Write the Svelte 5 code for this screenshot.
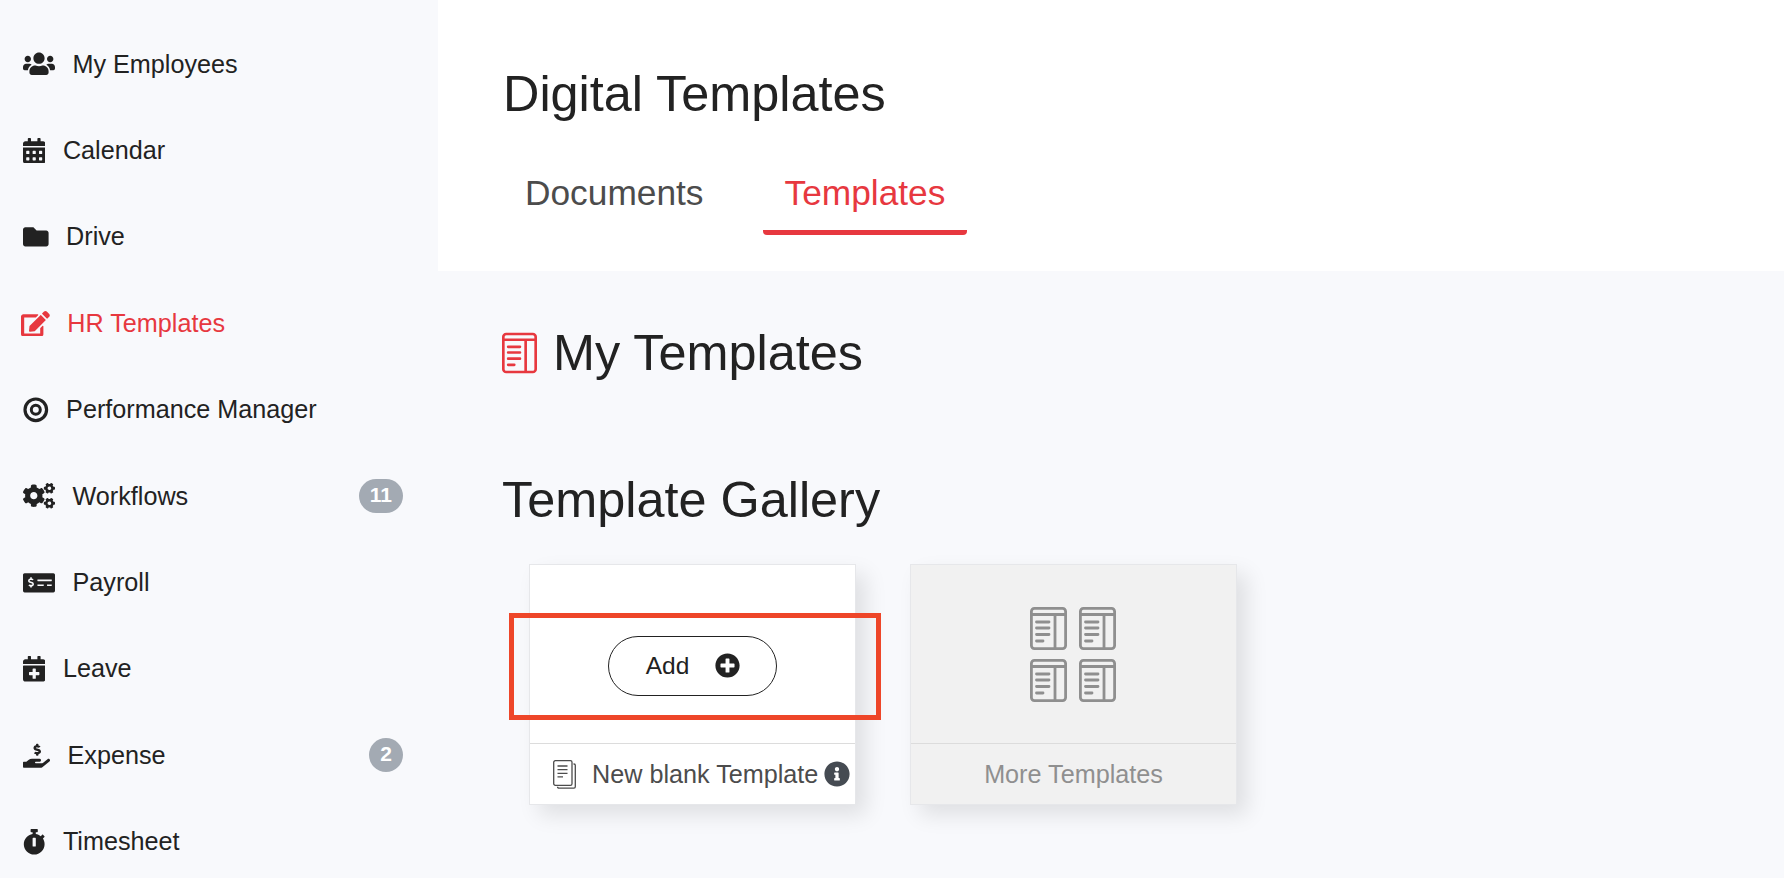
<script lang="ts">
  const P = {
    users: 'M96 224c35.3 0 64-28.7 64-64s-28.7-64-64-64-64 28.7-64 64 28.7 64 64 64zm448 0c35.3 0 64-28.7 64-64s-28.7-64-64-64-64 28.7-64 64 28.7 64 64 64zm32 32h-64c-17.6 0-33.5 7.1-45.1 18.6 40.3 22.1 68.9 62 75.1 109.4h66c17.7 0 32-14.3 32-32v-32c0-35.3-28.7-64-64-64zm-256 0c61.9 0 112-50.1 112-112S381.9 32 320 32 208 82.1 208 144s50.1 112 112 112zm76.8 32h-8.3c-20.8 10-43.9 16-68.5 16s-47.6-6-68.5-16h-8.3C179.6 288 128 339.6 128 403.2V432c0 26.5 21.5 48 48 48h288c26.5 0 48-21.5 48-48v-28.8c0-63.6-51.6-115.2-115.2-115.2zm-223.7-13.4C161.5 263.1 145.6 256 128 256H64c-35.3 0-64 28.7-64 64v32c0 17.7 14.3 32 32 32h65.9c6.3-47.4 34.9-87.3 75.2-109.4z',
    calendar: 'M0 464c0 26.5 21.5 48 48 48h352c26.5 0 48-21.5 48-48V192H0v272zm320-196c0-6.6 5.4-12 12-12h40c6.6 0 12 5.4 12 12v40c0 6.6-5.4 12-12 12h-40c-6.6 0-12-5.4-12-12v-40zm0 128c0-6.6 5.4-12 12-12h40c6.6 0 12 5.4 12 12v40c0 6.6-5.4 12-12 12h-40c-6.6 0-12-5.4-12-12v-40zM192 268c0-6.6 5.4-12 12-12h40c6.6 0 12 5.4 12 12v40c0 6.6-5.4 12-12 12h-40c-6.6 0-12-5.4-12-12v-40zm0 128c0-6.6 5.4-12 12-12h40c6.6 0 12 5.4 12 12v40c0 6.6-5.4 12-12 12h-40c-6.6 0-12-5.4-12-12v-40zM64 268c0-6.6 5.4-12 12-12h40c6.6 0 12 5.4 12 12v40c0 6.6-5.4 12-12 12H76c-6.6 0-12-5.4-12-12v-40zm0 128c0-6.6 5.4-12 12-12h40c6.6 0 12 5.4 12 12v40c0 6.6-5.4 12-12 12H76c-6.6 0-12-5.4-12-12v-40zM400 64h-48V16c0-8.8-7.2-16-16-16h-32c-8.8 0-16 7.2-16 16v48H160V16c0-8.8-7.2-16-16-16h-32c-8.8 0-16 7.2-16 16v48H48C21.5 64 0 85.5 0 112v48h448v-48c0-26.5-21.5-48-48-48z',
    folder: 'M464 128H272l-64-64H48C21.49 64 0 85.49 0 112v288c0 26.51 21.49 48 48 48h416c26.51 0 48-21.49 48-48V176c0-26.51-21.49-48-48-48z',
    edit: 'M402.6 83.2l90.2 90.2c3.8 3.8 3.8 10 0 13.8L274.4 405.6l-92.8 10.3c-12.4 1.4-22.9-9.1-21.5-21.5l10.3-92.8L388.8 83.2c3.8-3.8 10-3.8 13.8 0zm162-22.9l-48.8-48.8c-15.2-15.2-39.9-15.2-55.2 0l-35.4 35.4c-3.8 3.8-3.8 10 0 13.8l90.2 90.2c3.8 3.8 10 3.8 13.8 0l35.4-35.4c15.2-15.3 15.2-40 0-55.2zM384 346.2V448H64V128h229.8c3.2 0 6.2-1.3 8.5-3.5l40-40c7.6-7.6 2.2-20.5-8.5-20.5H48C21.5 64 0 85.5 0 112v352c0 26.5 21.5 48 48 48h352c26.5 0 48-21.5 48-48V306.2c0-10.7-12.9-16-20.5-8.5l-40 40c-2.2 2.3-3.5 5.3-3.5 8.5z',
    target: 'M256 8a248 248 0 1 0 0 496a248 248 0 1 0 0-496zm0 64a184 184 0 1 1 0 368a184 184 0 1 1 0-368zm0 64a120 120 0 1 0 0 240a120 120 0 1 0 0-240zm0 60a60 60 0 1 1 0 120a60 60 0 1 1 0-120z',
    cogs: 'M512.1 191l-8.2 14.3c-3 5.3-9.4 7.5-15.1 5.4-11.8-4.4-22.6-10.7-32.1-18.6-4.6-3.8-5.8-10.5-2.8-15.7l8.2-14.3c-6.9-8-12.3-17.3-15.9-27.4h-16.5c-6 0-11.2-4.3-12.2-10.3-2-12-2.1-24.6 0-37.1 1-6 6.2-10.4 12.2-10.4h16.5c3.6-10.1 9-19.4 15.9-27.4l-8.2-14.3c-3-5.2-1.9-11.9 2.8-15.7 9.5-7.9 20.4-14.2 32.1-18.6 5.7-2.1 12.1.1 15.1 5.4l8.2 14.3c10.5-1.9 21.2-1.9 31.7 0L552 6.3c3-5.3 9.4-7.5 15.1-5.4 11.8 4.4 22.6 10.7 32.1 18.6 4.6 3.8 5.8 10.5 2.8 15.7l-8.2 14.3c6.9 8 12.3 17.3 15.9 27.4h16.5c6 0 11.2 4.3 12.2 10.3 2 12 2.1 24.6 0 37.1-1 6-6.2 10.4-12.2 10.4h-16.5c-3.6 10.1-9 19.4-15.9 27.4l8.2 14.3c3 5.2 1.9 11.9-2.8 15.7-9.5 7.9-20.4 14.2-32.1 18.6-5.7 2.1-12.1-.1-15.1-5.4l-8.2-14.3c-10.4 1.9-21.2 1.9-31.7 0zm-10.5-58.8c38.5 29.6 82.4-14.3 52.8-52.8-38.5-29.7-82.4 14.3-52.8 52.8zM386.3 286.1l33.7 16.8c10.1 5.8 14.5 18.1 10.5 29.1-8.9 24.2-26.4 46.4-42.6 65.8-7.4 8.9-20.2 11.1-30.3 5.3l-29.1-16.8c-16 13.7-34.6 24.6-54.9 31.7v33.6c0 11.6-8.3 21.6-19.7 23.6-24.6 4.2-50.4 4.4-75.9 0-11.5-2-20-11.9-20-23.6V418c-20.3-7.2-38.9-18-54.9-31.7L74 403c-10 5.8-22.9 3.6-30.3-5.3-16.2-19.4-33.3-41.6-42.2-65.7-4-10.9.4-23.2 10.5-29.1l33.3-16.8c-3.9-20.9-3.9-42.4 0-63.4L12 205.8c-10.1-5.8-14.6-18.1-10.5-29 8.9-24.2 26-46.4 42.2-65.8 7.4-8.9 20.2-11.1 30.3-5.3l29.1 16.8c16-13.7 34.6-24.6 54.9-31.7V57.1c0-11.5 8.2-21.5 19.6-23.5 24.6-4.2 50.5-4.4 76-.1 11.5 2 20 11.9 20 23.6v33.6c20.3 7.2 38.9 18 54.9 31.7l29.1-16.8c10-5.8 22.9-3.6 30.3 5.3 16.2 19.4 33.2 41.6 42.1 65.8 4 10.9.1 23.2-10 29.1l-33.7 16.8c3.9 21 3.9 42.5 0 63.5zm-117.6 21.1c59.2-77-28.7-164.9-105.7-105.7-59.2 77 28.7 164.9 105.7 105.7zm243.4 182.7l-8.2 14.3c-3 5.3-9.4 7.5-15.1 5.4-11.8-4.4-22.6-10.7-32.1-18.6-4.6-3.8-5.8-10.5-2.8-15.7l8.2-14.3c-6.9-8-12.3-17.3-15.9-27.4h-16.5c-6 0-11.2-4.3-12.2-10.3-2-12-2.1-24.6 0-37.1 1-6 6.2-10.4 12.2-10.4h16.5c3.6-10.1 9-19.4 15.9-27.4l-8.2-14.3c-3-5.2-1.9-11.9 2.8-15.7 9.5-7.9 20.4-14.2 32.1-18.6 5.7-2.1 12.1.1 15.1 5.4l8.2 14.3c10.5-1.9 21.2-1.9 31.7 0l8.2-14.3c3-5.3 9.4-7.5 15.1-5.4 11.8 4.4 22.6 10.7 32.1 18.6 4.6 3.8 5.8 10.5 2.8 15.7l-8.2 14.3c6.9 8 12.3 17.3 15.9 27.4h16.5c6 0 11.2 4.3 12.2 10.3 2 12 2.1 24.6 0 37.1-1 6-6.2 10.4-12.2 10.4h-16.5c-3.6 10.1-9 19.4-15.9 27.4l8.2 14.3c3 5.2 1.9 11.9-2.8 15.7-9.5 7.9-20.4 14.2-32.1 18.6-5.7 2.1-12.1-.1-15.1-5.4l-8.2-14.3c-10.4 1.9-21.2 1.9-31.7 0zM501.6 431c38.5 29.6 82.4-14.3 52.8-52.8-38.5-29.6-82.4 14.3-52.8 52.8z',
    money: 'M608 64H32C14.33 64 0 78.33 0 96v320c0 17.67 14.33 32 32 32h576c17.67 0 32-14.33 32-32V96c0-17.67-14.33-32-32-32zM176 327.88V344c0 4.42-3.58 8-8 8h-16c-4.42 0-8-3.58-8-8v-16.29c-11.29-.58-22.27-4.52-31.37-11.35-3.9-2.93-4.1-8.77-.57-12.14l11.75-11.21c2.77-2.64 6.89-2.76 10.13-.73 3.87 2.42 8.26 3.72 12.82 3.72h28.11c6.5 0 11.8-5.92 11.8-13.19 0-5.95-3.61-11.19-8.77-12.73l-45-13.5c-18.59-5.58-31.58-23.42-31.58-43.39 0-24.52 19.05-44.44 42.67-45.07V152c0-4.42 3.58-8 8-8h16c4.42 0 8 3.58 8 8v16.29c11.29.58 22.27 4.51 31.37 11.35 3.9 2.93 4.1 8.77.57 12.14l-11.75 11.21c-2.77 2.64-6.89 2.76-10.13.73-3.87-2.43-8.26-3.72-12.82-3.72h-28.11c-6.5 0-11.8 5.92-11.8 13.19 0 5.95 3.61 11.19 8.77 12.73l45 13.5c18.59 5.58 31.58 23.42 31.58 43.39 0 24.53-19.05 44.44-42.67 45.07zM416 312c0 4.42-3.58 8-8 8H296c-4.42 0-8-3.58-8-8v-16c0-4.42 3.58-8 8-8h112c4.42 0 8 3.58 8 8v16zm160 0c0 4.42-3.58 8-8 8h-80c-4.42 0-8-3.58-8-8v-16c0-4.42 3.58-8 8-8h80c4.42 0 8 3.58 8 8v16zm0-96c0 4.42-3.58 8-8 8H296c-4.42 0-8-3.58-8-8v-16c0-4.42 3.58-8 8-8h272c4.42 0 8 3.58 8 8v16z',
    calPlus: 'M436 160H12c-6.6 0-12-5.4-12-12v-36c0-26.5 21.5-48 48-48h48V12c0-6.6 5.4-12 12-12h40c6.6 0 12 5.4 12 12v52h128V12c0-6.6 5.4-12 12-12h40c6.6 0 12 5.4 12 12v52h48c26.5 0 48 21.5 48 48v36c0 6.6-5.4 12-12 12zM12 192h424c6.6 0 12 5.4 12 12v260c0 26.5-21.5 48-48 48H48c-26.5 0-48-21.5-48-48V204c0-6.6 5.4-12 12-12zm316 140c0-6.6-5.4-12-12-12h-60v-60c0-6.6-5.4-12-12-12h-40c-6.6 0-12 5.4-12 12v60h-60c-6.6 0-12 5.4-12 12v40c0 6.6 5.4 12 12 12h60v60c0 6.6 5.4 12 12 12h40c6.6 0 12-5.4 12-12v-60h60c6.6 0 12-5.4 12-12v-40z',
    hand: 'M271.06,144.3l54.27,14.3a8.59,8.59,0,0,1,6.63,8.1c0,4.6-4.09,8.4-9.12,8.4h-35.6a30,30,0,0,1-11.19-2.2c-5.24-2.2-11.28-1.7-15.3,2l-19,17.5a11.68,11.68,0,0,0-2.25,2.66,11.42,11.42,0,0,0,3.88,15.74,83.77,83.77,0,0,0,34.51,11.5V240c0,8.8,7.83,16,17.37,16h17.37c9.55,0,17.38-7.2,17.38-16V222.4c32.93-3.6,57.84-31,53.5-63-3.15-23-22.46-41.3-46.56-47.7L282.68,97.4a8.59,8.59,0,0,1-6.63-8.1c0-4.6,4.09-8.4,9.12-8.4h35.6A30,30,0,0,1,332,83.1c5.23,2.2,11.28,1.7,15.3-2l19-17.5A11.31,11.31,0,0,0,368.47,61a11.43,11.43,0,0,0-3.84-15.78,83.82,83.82,0,0,0-34.52-11.5V16c0-8.8-7.82-16-17.37-16H295.37C285.82,0,278,7.2,278,16V33.6c-32.89,3.6-57.85,31-53.51,63C227.63,119.6,247,137.9,271.06,144.3ZM565.27,328.1c-11.8-10.7-30.2-10-42.6,0L430.27,402a63.64,63.64,0,0,1-40,14H272a16,16,0,0,1,0-32h78.29c15.9,0,30.71-10.9,33.25-26.6a31.2,31.2,0,0,0,.46-5.46A32,32,0,0,0,352,320H192a117.66,117.66,0,0,0-74.1,26.29L71.4,384H16A16,16,0,0,0,0,400v96a16,16,0,0,0,16,16H372.77a64,64,0,0,0,40-14L564,377a32,32,0,0,0,1.28-48.9Z',
    stopwatch: 'M432 304c0 114.9-93.1 208-208 208S16 418.9 16 304c0-104 76.3-190.2 176-205.5V64h-28c-6.6 0-12-5.4-12-12V12c0-6.6 5.4-12 12-12h120c6.6 0 12 5.4 12 12v40c0 6.6-5.4 12-12 12h-28v34.5c37.5 5.8 71.7 21.6 99.7 44.6l27.5-27.5c4.7-4.7 12.3-4.7 17 0l28.3 28.3c4.7 4.7 4.7 12.3 0 17l-29.4 29.4-.6.6C419.7 223.3 432 262.2 432 304zm-176 36V188.5c0-6.6-5.4-12-12-12h-40c-6.6 0-12 5.4-12 12V340c0 6.6 5.4 12 12 12h40c6.6 0 12-5.4 12-12z',
    plus: 'M256 8C119 8 8 119 8 256s111 248 248 248 248-111 248-248S393 8 256 8zm144 276c0 6.6-5.4 12-12 12h-92v92c0 6.6-5.4 12-12 12h-56c-6.6 0-12-5.4-12-12v-92h-92c-6.6 0-12-5.4-12-12v-56c0-6.6 5.4-12 12-12h92v-92c0-6.6 5.4-12 12-12h56c6.6 0 12 5.4 12 12v92h92c6.6 0 12 5.4 12 12v56z',
    info: 'M256 8C119.043 8 8 119.083 8 256c0 136.997 111.043 248 248 248s248-111.003 248-248C504 119.083 392.957 8 256 8zm0 110c23.196 0 42 18.804 42 42s-18.804 42-42 42-42-18.804-42-42 18.804-42 42-42zm56 254c0 6.627-5.373 12-12 12h-88c-6.627 0-12-5.373-12-12v-24c0-6.627 5.373-12 12-12h12v-64h-12c-6.627 0-12-5.373-12-12v-24c0-6.627 5.373-12 12-12h64c6.627 0 12 5.373 12 12v100h12c6.627 0 12 5.373 12 12v24z',
  };

  const nav = [
    { label: 'My Employees', icon: P.users, vw: 640 },
    { label: 'Calendar', icon: P.calendar, vw: 448 },
    { label: 'Drive', icon: P.folder, vw: 512 },
    { label: 'HR Templates', icon: P.edit, vw: 576, active: true },
    { label: 'Performance Manager', icon: P.target, vw: 512 },
    { label: 'Workflows', icon: P.cogs, vw: 640, badge: '11' },
    { label: 'Payroll', icon: P.money, vw: 640 },
    { label: 'Leave', icon: P.calPlus, vw: 448 },
    { label: 'Expense', icon: P.hand, vw: 576, w: 27, badge: '2' },
    { label: 'Timesheet', icon: P.stopwatch, vw: 448 },
  ];
</script>

{#snippet tile(cls)}
  <svg class={cls} viewBox="0 0 37 43" fill="none" stroke="currentColor" stroke-width="2.8" stroke-linecap="round">
    <rect x="1.4" y="1.4" width="34.2" height="40.2" rx="3" />
    <path d="M1.4 7.5H35.6M25 7.5V41.6" stroke-linecap="butt" />
    <path d="M6.5 15H19M6.5 21H19M6.5 27.5H19M6.5 34H13" />
  </svg>
{/snippet}

<div class="page">
  <aside class="sidebar">
    {#each nav as item}
      <div class="nav-item" class:active={item.active}>
        <svg class="nav-icon" class:nudge={item.active} viewBox="0 0 {item.vw} 512" style="width:{item.w ?? item.vw * 0.05}px" fill="currentColor">
          <path d={item.icon} />
        </svg>
        <span class="nav-label">{item.label}</span>
        {#if item.badge}
          <span class="badge">{item.badge}</span>
        {/if}
      </div>
    {/each}
  </aside>

  <main class="main">
    <header class="top">
      <h1>Digital Templates</h1>
      <nav class="tabs">
        <span class="tab">Documents</span>
        <span class="tab current">Templates</span>
      </nav>
    </header>

    <section class="content">
      <h2 class="my-title">
        {@render tile('my-icon')}
        My Templates
      </h2>
      <h2 class="gallery-title">Template Gallery</h2>

      <div class="cards">
        <div class="card">
          <div class="card-body">
            <button class="add-btn">
              Add
              <svg class="plus" viewBox="0 0 512 512" fill="currentColor"><path d={P.plus} /></svg>
            </button>
          </div>
          <div class="card-foot">
            <svg class="doc" viewBox="0 0 23 29" fill="none" stroke="currentColor" stroke-width="1.3">
              <rect x="0.7" y="0.7" width="18.3" height="24.6" rx="1.6" />
              <path d="M20.5 4H21C21.8 4 22.3 4.5 22.3 5.3V26.8C22.3 27.6 21.8 28.2 21 28.2H6C5 28.2 4.5 27.6 4.5 26.8" />
              <path d="M4.5 6H14.5M4.5 9.7H14.5M4.5 13.3H14.5M4.5 16.8H10" />
            </svg>
            <span class="foot-text">New blank Template</span>
            <svg class="info" viewBox="0 0 512 512" fill="currentColor"><path d={P.info} /></svg>
          </div>
          <div class="annotation"></div>
        </div>

        <div class="card more">
          <div class="card-body">
            <div class="tiles">
              {@render tile('tile')}
              {@render tile('tile')}
              {@render tile('tile')}
              {@render tile('tile')}
            </div>
          </div>
          <div class="card-foot center">More Templates</div>
        </div>
      </div>
    </section>
  </main>
</div>

<style>
  :global(body) { margin: 0; background: #f8f9fc; }

  .page {
    display: flex;
    height: 878px;
    overflow: hidden;
    font-family: "Liberation Sans", Arial, sans-serif;
    color: #222;
    background: #f8f9fc;
  }

  .sidebar {
    width: 438px;
    flex: none;
    padding: 21px 35px 0 23px;
    box-sizing: border-box;
  }
  .nav-item {
    display: flex;
    align-items: center;
    gap: 17.5px;
    height: 86.4px;
    font-size: 25.2px;
  }
  .nav-item.active { color: #e7383f; }
  .nav-icon { height: 25.6px; flex: none; }
  .nav-icon.nudge { margin-left: -2px; }
  .badge {
    margin-left: auto;
    min-width: 33px;
    height: 34px;
    padding: 0 11px;
    box-sizing: border-box;
    border-radius: 17px;
    background: #a3aab3;
    color: #fff;
    font-size: 21px;
    font-weight: 700;
    line-height: 32px;
    text-align: center;
  }

  .main { flex: 1; min-width: 0; }
  .top {
    height: 271px;
    box-sizing: border-box;
    padding: 66px 0 0 65px;
    background: #fff;
  }
  h1 {
    margin: 0;
    font-size: 50.4px;
    font-weight: 400;
    line-height: 56px;
  }
  .tabs { display: flex; gap: 37px; margin-top: 51px; }
  .tab {
    padding: 0 22px 17px;
    font-size: 35.3px;
    line-height: 40px;
    color: #4c4c4c;
    border-bottom: 5px solid transparent;
    border-radius: 0 0 4px 4px;
  }
  .tab.current { color: #e7383f; border-bottom-color: #e7383f; }

  .content { padding: 54px 0 0 64px; }
  h2 {
    margin: 0;
    font-size: 50.4px;
    font-weight: 400;
    line-height: 56px;
  }
  .my-title { display: flex; align-items: center; gap: 16px; }
  .my-title :global(.my-icon) { width: 35px; height: 42px; color: #e7383f; }
  .gallery-title { margin-top: 91px; }

  .cards { display: flex; gap: 54px; margin: 36px 0 0 27px; }
  .card {
    position: relative;
    width: 327px;
    height: 241px;
    box-sizing: border-box;
    border: 1px solid #e6e7ea;
    background: #fff;
    box-shadow: 10px 10px 20px rgba(0, 0, 0, 0.1);
  }
  .card.more { background: #f1f1f1; color: #8f8f8f; }
  .card-body {
    height: 179px;
    box-sizing: border-box;
    border-bottom: 1px solid #dcdcdc;
    display: flex;
    align-items: center;
    justify-content: center;
  }
  .add-btn {
    display: flex;
    align-items: center;
    justify-content: center;
    gap: 26px;
    width: 169px;
    height: 60px;
    margin-top: 23px;
    padding: 0 0 0 1px;
    border: 1px solid #222;
    border-radius: 30px;
    background: #fff;
    color: #222;
    font: 24.5px "Liberation Sans", Arial, sans-serif;
  }
  .plus { width: 25px; height: 25px; }
  .card-foot {
    display: flex;
    align-items: center;
    height: 60px;
    padding-left: 23px;
    color: #4c4c4c;
    font-size: 25.2px;
  }
  .card-foot.center {
    justify-content: center;
    padding: 0;
    color: #8f8f8f;
  }
  .doc { width: 23px; height: 29px; flex: none; }
  .foot-text { margin-left: 16px; white-space: nowrap; }
  .info { width: 26px; height: 26px; flex: none; margin-left: 6px; color: #454b52; }
  .annotation {
    position: absolute;
    left: -21px;
    top: 48px;
    width: 372px;
    height: 107px;
    box-sizing: border-box;
    border: 5px solid #ee4629;
    pointer-events: none;
  }

  .tiles {
    display: grid;
    grid-template-columns: 37px 37px;
    gap: 9px 12px;
    margin-right: 1px;
  }
  .tiles :global(.tile) { width: 37px; height: 43px; display: block; color: #8f8f8f; }
</style>
